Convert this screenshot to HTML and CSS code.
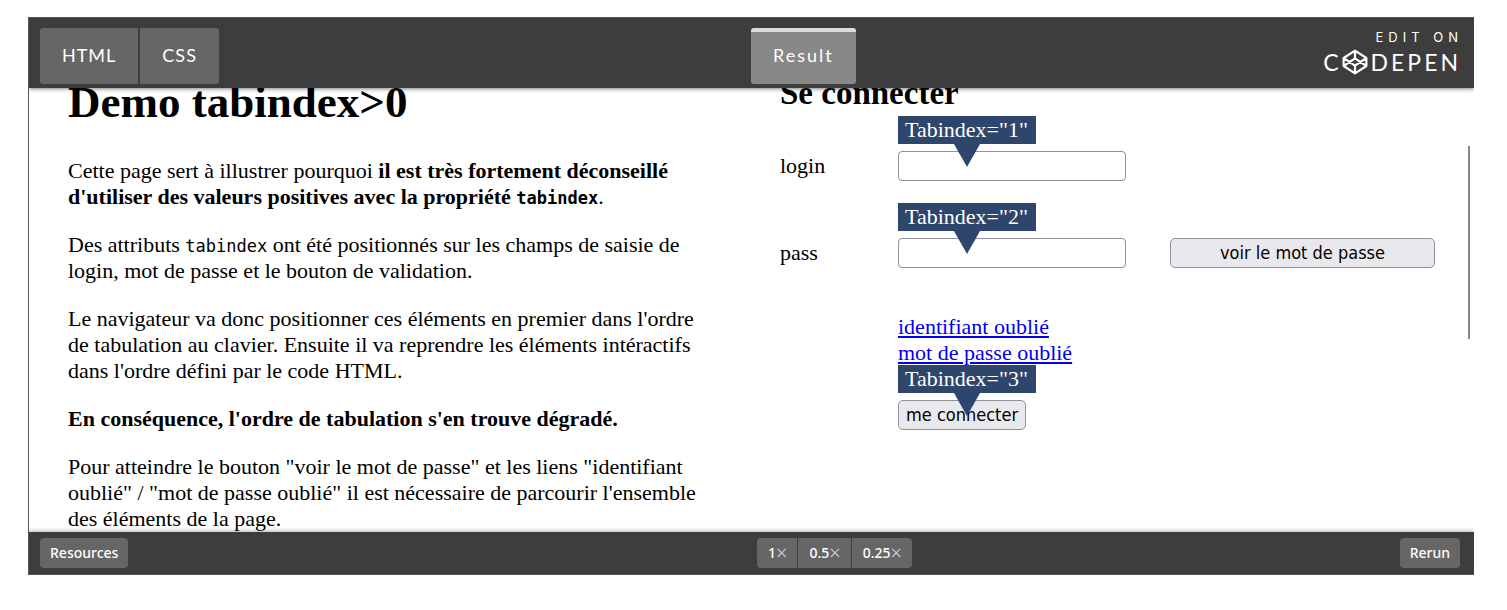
FILE: index.html
```html
<!DOCTYPE html>
<html lang="fr">
<head>
<meta charset="utf-8">
<title>Demo tabindex&gt;0</title>
<link rel="stylesheet" href="styles.css">
</head>
<body>
<div class="embed">
  <header class="bar top-bar">
    <nav class="tabs">
      <button class="tab" type="button">HTML</button>
      <button class="tab" type="button">CSS</button>
    </nav>
    <div class="bar-right">
      <button class="tab active" type="button">Result</button>
      <a class="brand" href="#">
        <span class="edit-on">EDIT ON</span>
        <span class="logo">
          <span>C</span>
          <svg class="logo-mark" viewBox="0 0 24 24" aria-hidden="true">
            <path d="M12 1.5 22.500 8.300V15.700L12 22.500 1.500 15.700V8.300ZM1.500 8.300 12 15.300 22.500 8.300M1.500 15.700 12 8.700 22.500 15.700M12 1.500V8.700M12 15.300V22.500"/>
          </svg>
          <span>DEPEN</span>
        </span>
      </a>
    </div>
  </header>

  <main class="result">
    <div class="content">
      <article class="text">
        <h1>Demo tabindex&gt;0</h1>
        <p>Cette page sert à illustrer pourquoi <strong>il est très fortement déconseillé d'utiliser des valeurs positives avec la propriété <code>tabindex</code></strong>.</p>
        <p>Des attributs <code>tabindex</code> ont été positionnés sur les champs de saisie de login, mot de passe et le bouton de validation.</p>
        <p>Le navigateur va donc positionner ces éléments en premier dans l'ordre de tabulation au clavier. Ensuite il va reprendre les éléments intéractifs dans l'ordre défini par le code HTML.</p>
        <p><strong>En conséquence, l'ordre de tabulation s'en trouve dégradé.</strong></p>
        <p>Pour atteindre le bouton "voir le mot de passe" et les liens "identifiant oublié" / "mot de passe oublié" il est nécessaire de parcourir l'ensemble des éléments de la page.</p>
      </article>
      <form class="login">
        <h2>Se connecter</h2>
        <div class="fields">
          <label for="login">login</label>
          <div class="field"><span class="tag">Tabindex="1"</span><input id="login" type="text" tabindex="1"></div>
          <label class="pass-label" for="pass">pass</label>
          <div class="field"><span class="tag">Tabindex="2"</span><input id="pass" type="password" tabindex="2"></div>
          <button class="btn" type="button">voir le mot de passe</button>
          <div class="actions">
            <a href="#">identifiant oublié</a>
            <a href="#">mot de passe oublié</a>
            <div class="field submit"><span class="tag">Tabindex="3"</span><button class="btn" type="button" tabindex="3">me connecter</button></div>
          </div>
        </div>
      </form>
    </div>
    <div class="scroll-thumb"></div>
  </main>

  <footer class="bar bottom-bar">
    <button class="small" type="button">Resources</button>
    <div class="bar-right">
      <div class="zoom">
        <button class="small" type="button">1<span class="times">×</span></button>
        <button class="small" type="button">0.5<span class="times">×</span></button>
        <button class="small" type="button">0.25<span class="times">×</span></button>
      </div>
      <button class="small" type="button">Rerun</button>
    </div>
  </footer>
</div>
</body>
</html>
```

FILE: styles.css
```css
* { box-sizing: border-box; }
body {
  margin: 0;
  padding: 17px 33px 35px 28px;
  height: 100vh;
  background: #fff;
  color: #000;
  font-family: "Liberation Serif", serif;
  font-size: 22px;
  line-height: 26px;
}
button, input { font: inherit; margin: 0; }

.embed {
  height: 100%;
  display: flex;
  flex-direction: column;
  border: solid #555;
  border-width: 1px 0 1px 1px;
  overflow: hidden;
}
.bar {
  position: relative;
  z-index: 2;
  display: grid;
  grid-template-columns: 1fr 1fr;
  background: #3d3d3d;
  color: #fff;
  font-family: Lato, sans-serif;
}
.top-bar { padding: 10px 14px 4px 11px; box-shadow: 0 1px 4px rgba(0, 0, 0, .5); }
.bottom-bar { padding: 6px 14px 6px 11px; box-shadow: 0 -1px 4px rgba(0, 0, 0, .3); }
.tabs, .zoom { display: flex; }
.bar-right { display: flex; justify-content: space-between; align-items: flex-start; }
.top-bar .bar-right { padding-left: 1px; }
.bottom-bar .bar-right { padding-left: 7px; }

.tab {
  height: 56px;
  padding: 0 22px 2px;
  border: 0;
  border-radius: 3px;
  background: #666;
  color: #fff;
  font-size: 18px;
  letter-spacing: 1px;
}
.tabs .tab { border-radius: 3px 0 0 3px; }
.tabs .tab + .tab { margin-left: 2px; border-radius: 0 3px 3px 0; }
.tab.active {
  padding-bottom: 6px;
  border-top: 4px solid #ddd;
  background: #888;
  letter-spacing: 2px;
}

.brand {
  display: flex;
  flex-direction: column;
  align-items: flex-end;
  color: #fff;
  text-decoration: none;
}
.edit-on {
  margin-right: -3px;
  font: 13px/18px Inter, sans-serif;
  letter-spacing: 5px;
}
.logo {
  display: flex;
  align-items: center;
  margin-right: -1px;
  font-size: 23px;
  line-height: 32px;
  letter-spacing: 3px;
}
.logo-mark {
  width: 26px;
  height: 26px;
  margin-right: 3px;
  fill: none;
  stroke: #fff;
  stroke-width: 2;
  stroke-linejoin: round;
}

.small {
  display: flex;
  align-items: center;
  height: 30px;
  padding: 0 10px;
  border: 0;
  border-radius: 4px;
  background: #666;
  color: #fff;
  font: 500 14px/30px "Noto Sans", sans-serif;
  justify-self: start;
}
.times { color: #cde; font-size: 20px; font-weight: 300; }
.zoom { gap: 1px; }
.zoom .small { padding-left: 11px; border-radius: 0; }
.zoom .small:first-child { border-radius: 4px 0 0 4px; }
.zoom .small:last-child { border-radius: 0 4px 4px 0; }

.result {
  position: relative;
  flex: 1;
  min-height: 0;
  overflow: hidden;
}
.content {
  display: grid;
  grid-template-columns: 1fr 1fr;
  gap: 57px;
  margin-top: -14px;
  padding: 0 39px;
}
.text { padding: 2px 10px 0 0; }
h1 { margin: 0 0 30px; font-size: 45px; line-height: 52px; }
h2 { margin: 0 0 39px; font-size: 33px; line-height: 38px; }
p { margin: 0 0 22px; }
code { font-family: "DejaVu Sans Mono", monospace; font-size: 17px; line-height: 20px; }

.fields {
  display: grid;
  grid-template-columns: 118fr 228fr 309fr;
  row-gap: 57px;
  align-items: center;
}
.pass-label { grid-column: 1; }
.fields > .btn { margin-left: 44px; }
.field { position: relative; display: flex; }
.field input {
  width: 100%;
  height: 30px;
  padding: 0 6px;
  border: 1px solid #8f8f9d;
  border-radius: 4px;
  background: #fff;
}
.tag {
  position: absolute;
  left: 0;
  bottom: 100%;
  z-index: 1;
  margin-bottom: 7px;
  padding: 0 8px 0 7px;
  background: #2e466c;
  color: #fff;
  line-height: 28px;
  white-space: nowrap;
}
.tag::after {
  content: "";
  position: absolute;
  top: 100%;
  left: 50%;
  margin-left: -13px;
  border: 13px solid transparent;
  border-top: 23px solid #2e466c;
  border-bottom: 0;
}
.btn {
  height: 30px;
  padding: 0 7px;
  border: 1px solid #8f8f9d;
  border-radius: 5px;
  background: #e9e9ed;
  color: #000;
  font: 18px/26px "DejaVu Sans Condensed", "Noto Sans", sans-serif;
}
.actions {
  grid-column: 2 / 4;
  display: flex;
  flex-direction: column;
  align-items: flex-start;
  margin-top: -11px;
}
.actions a { color: #00e; }
.submit { margin-top: 34px; }

.scroll-thumb {
  position: absolute;
  top: 58px;
  right: 4px;
  width: 2px;
  height: 193px;
  background: #888;
}
```
